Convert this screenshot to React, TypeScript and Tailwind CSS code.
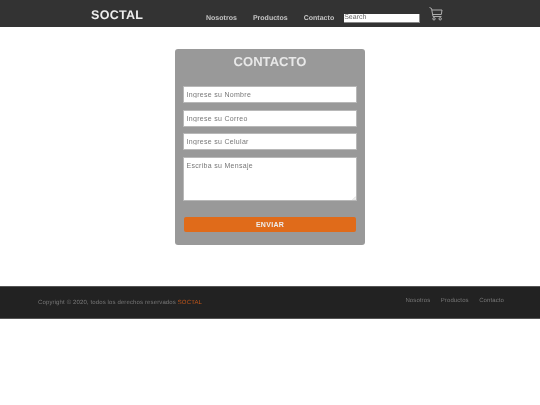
export default function App() {
  return (
    <div className="min-h-[405px] will-change-transform [text-rendering:geometricPrecision] font-['Liberation_Sans',Arial,sans-serif]">
      <header className="h-[27px] bg-[#333333] flex items-start pl-[91px]">
        <div className="w-[115px] pt-[8px] text-[12.5px] leading-[14px] font-bold tracking-[0.3px] text-[#eeeeee]">SOCTAL</div>
        <nav className="flex gap-[16px] pt-[14.5px] text-[7px] leading-[8px] font-bold tracking-[0.02px] text-[#c4c4c4]">
          <span>Nosotros</span>
          <span>Productos</span>
          <span>Contacto</span>
        </nav>
        <div className="ml-[10px] mt-[14px] w-[76px] h-[9px] bg-white border-r border-b border-[#888888] text-[7px] leading-[8px] text-[#666666]">Search</div>
        <svg className="ml-[9px] mt-[7px] text-[#cccccc]" width="14" height="14" viewBox="0 0 14 14" fill="none" stroke="currentColor" strokeWidth="0.8">
          <path d="M0.5 0.5 L2.5 1.5 L4 9.5 H12.5" />
          <path d="M3 3 H13 L12.3 7.5 H3.8" />
          <circle cx="5" cy="11.8" r="1.2" />
          <circle cx="11.2" cy="11.8" r="1.2" />
        </svg>
      </header>

      <main className="flex justify-center pt-[22px] pb-[41px]">
        <form className="w-[190px] h-[196px] rounded-[3px] bg-[#999999] px-[9px] pt-[5px] flex flex-col">
          <h1 className="text-center text-[13px] leading-[15px] font-bold tracking-[0.05px] text-[#e8e8e8]">CONTACTO</h1>
          <input
            placeholder="Ingrese su Nombre"
            className="mt-[18px] h-[15px] w-full bg-white px-[2.5px] text-[7px] tracking-[0.3px] outline-none ring-1 ring-[#b8b8b8] placeholder:text-[#777777]"
          />
          <input
            placeholder="Ingrese su Correo"
            className="mt-[8.5px] h-[15px] w-full bg-white px-[2.5px] text-[7px] tracking-[0.3px] outline-none ring-1 ring-[#b8b8b8] placeholder:text-[#777777]"
          />
          <input
            placeholder="Ingrese su Celular"
            className="mt-[8.5px] h-[15px] w-full bg-white px-[2.5px] text-[7px] tracking-[0.3px] outline-none ring-1 ring-[#b8b8b8] placeholder:text-[#777777]"
          />
          <div className="relative mt-[8.5px] h-[42.5px]">
            <textarea
              placeholder="Escriba su Mensaje"
              className="block h-full w-full resize-none bg-white px-[2.5px] py-[3px] text-[7px] leading-[9px] tracking-[0.3px] outline-none ring-1 ring-[#b8b8b8] placeholder:text-[#777777]"
            />
            <svg className="absolute right-0 bottom-0" width="4" height="4" viewBox="0 0 4 4" stroke="#bbbbbb" strokeWidth="0.6">
              <path d="M0.5 4 L4 0.5 M2.5 4 L4 2.5" />
            </svg>
          </div>
          <button type="button" className="mt-[17px] h-[15px] w-full rounded-[2px] bg-[#e06b1a] pt-[1px] text-[7px] font-bold tracking-[0.3px] text-[#eeeeee]">ENVIAR</button>
        </form>
      </main>

      <footer className="h-[33px] bg-[#222222] border-t border-b border-[#555555] flex items-center justify-between pl-[38px] pr-[36px]">
        <p className="mt-[1px] text-[6px] tracking-[0.13px] text-[#777777]">
          Copyright © 2020, todos los derechos reservados <span className="text-[#c2561a]">SOCTAL</span>
        </p>
        <nav className="flex gap-[10.5px] text-[6px] tracking-[0.1px] text-[#777777] -mt-[2px]">
          <span>Nosotros</span>
          <span>Productos</span>
          <span>Contacto</span>
        </nav>
      </footer>
    </div>
  );
}
